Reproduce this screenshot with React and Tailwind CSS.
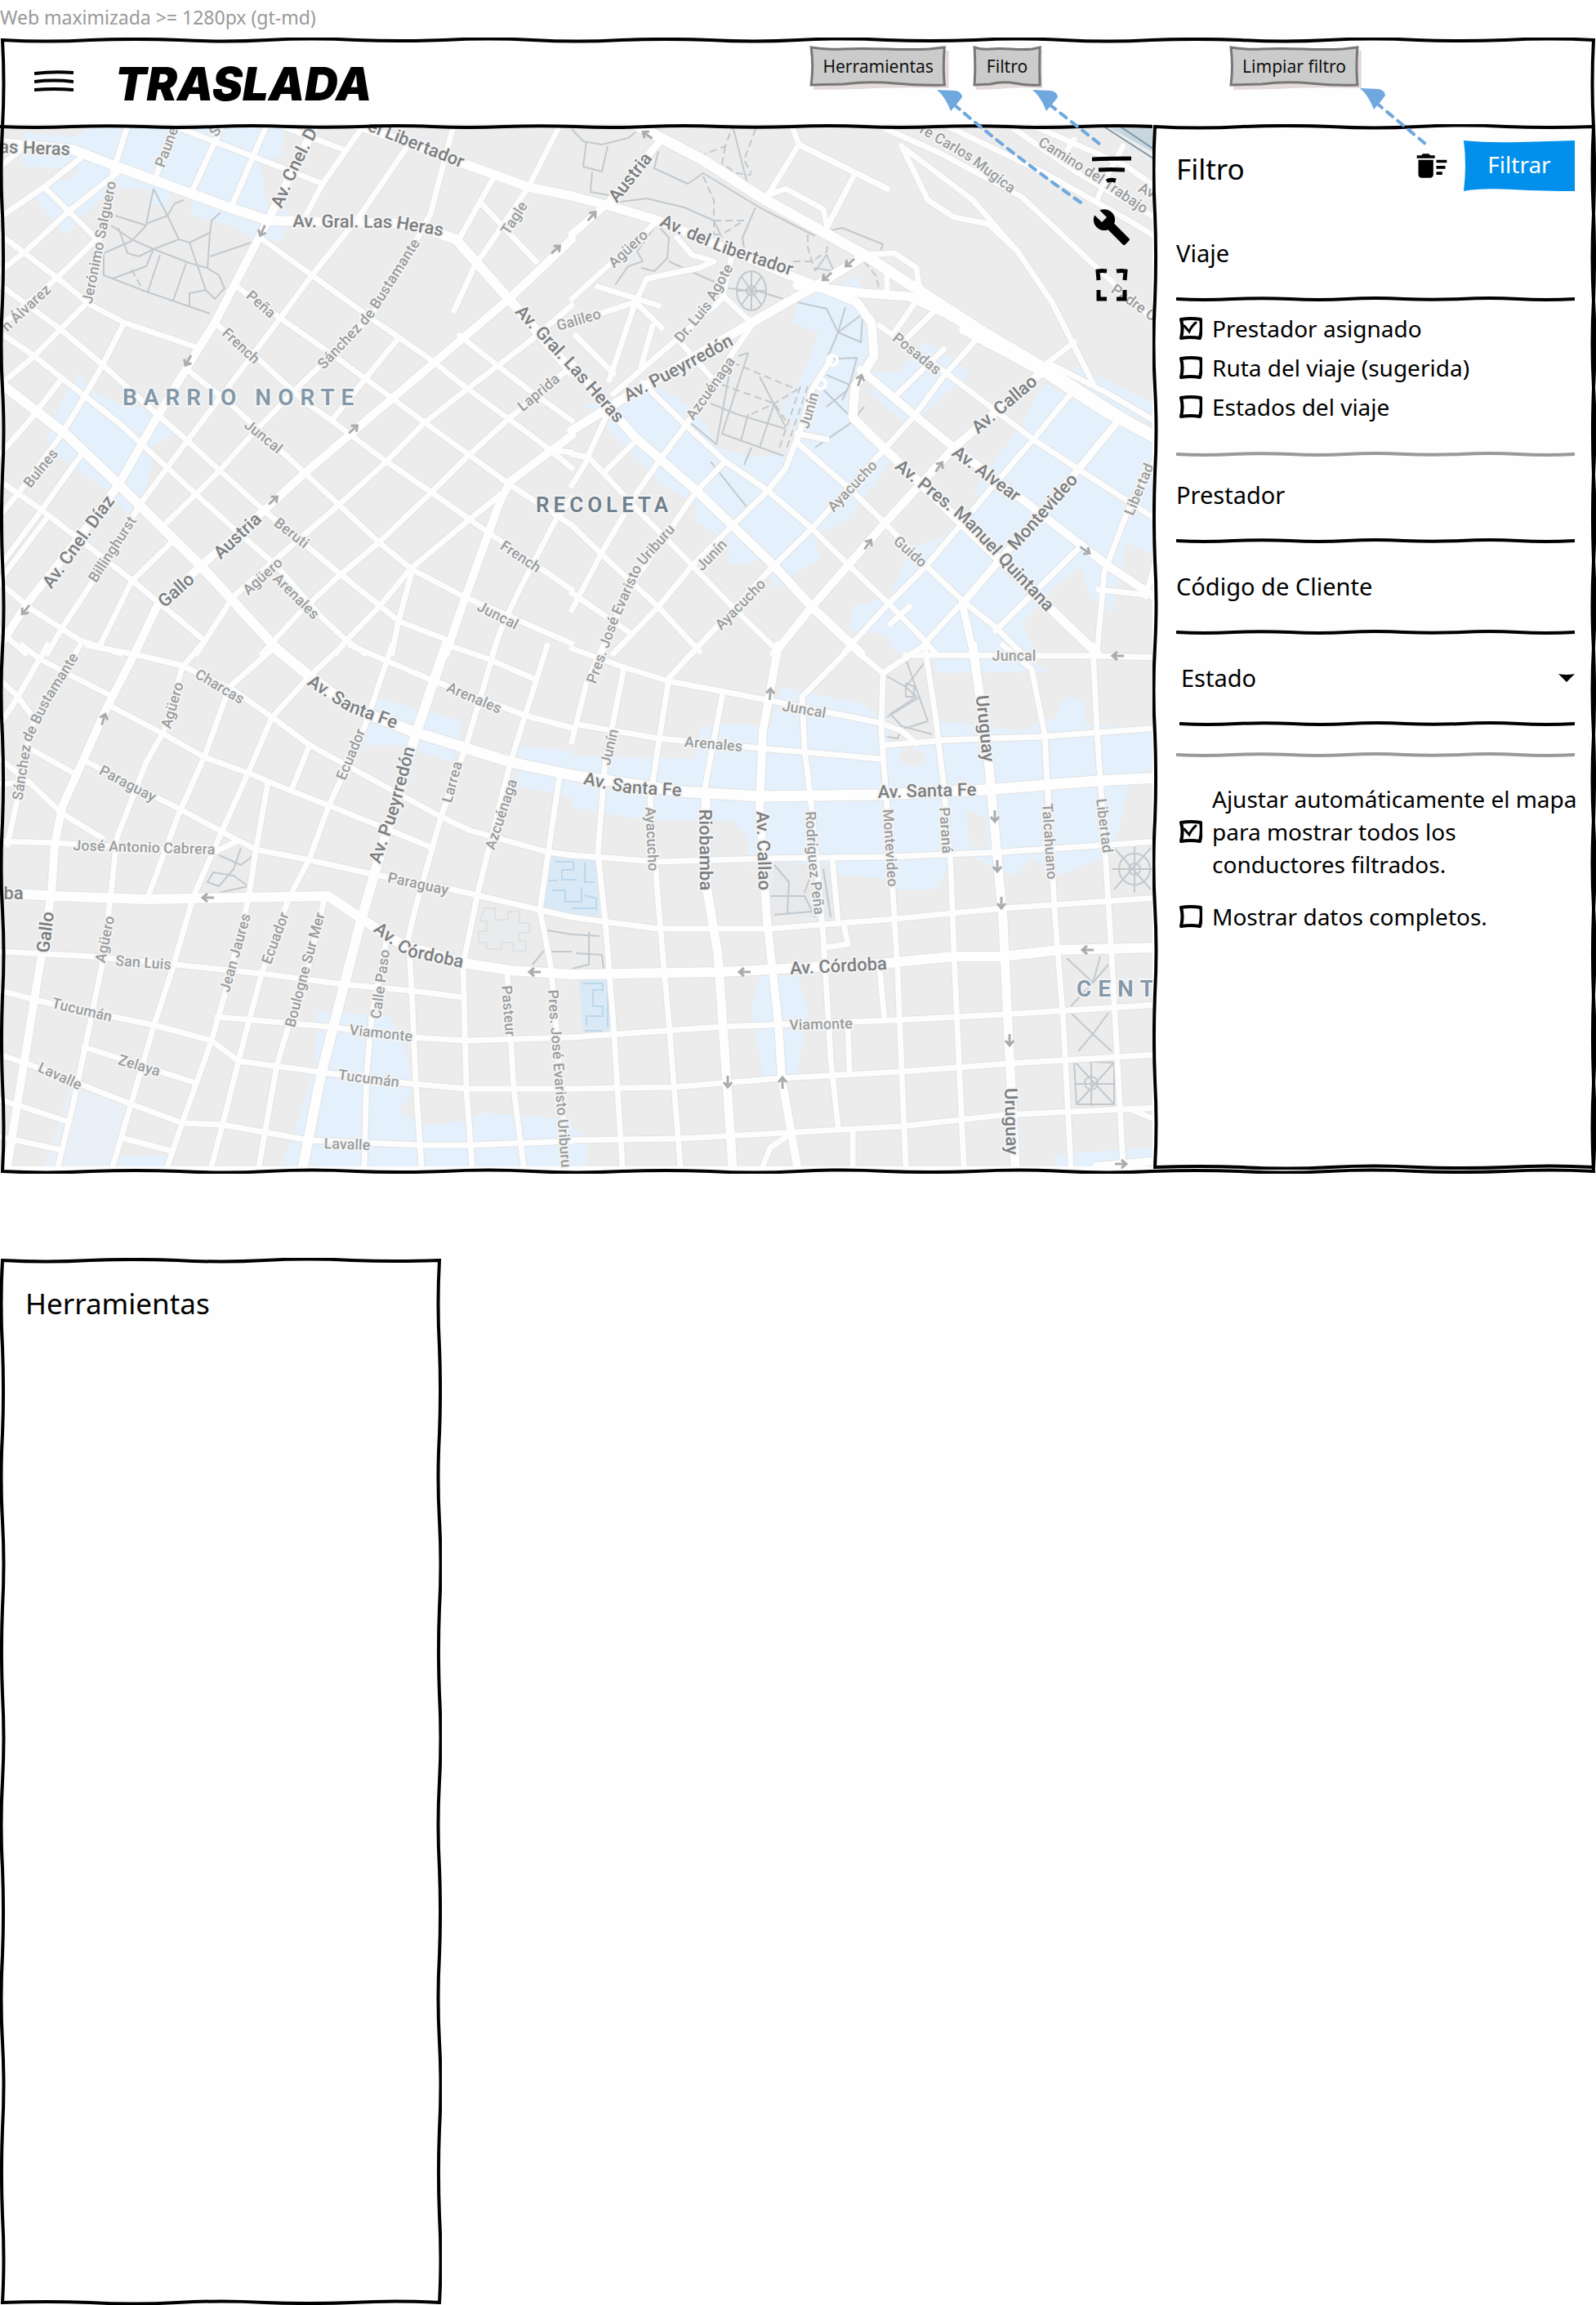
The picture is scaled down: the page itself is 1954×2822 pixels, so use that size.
import React from "react";
import { MdBuild, MdDeleteSweep } from "react-icons/md";

/* ---------- Hand-drawn strokes ---------- */

function wave(x1, y1, x2, y2, step, amp) {
  const len = Math.hypot(x2 - x1, y2 - y1);
  const n = Math.max(2, Math.round(len / step));
  const nx = -(y2 - y1) / len;
  const ny = (x2 - x1) / len;
  let d = "";
  for (let i = 0; i < n; i++) {
    const side = (i % 2 ? -amp : amp) * (i % 3 === 1 ? 0.7 : 1);
    const m = (i + 0.5) / n;
    const e = (i + 1) / n;
    d += ` Q${x1 + (x2 - x1) * m + nx * side},${y1 + (y2 - y1) * m + ny * side} ${x1 + (x2 - x1) * e},${y1 + (y2 - y1) * e}`;
  }
  return d;
}

function boxPath(x1, y1, x2, y2, step, amp) {
  return `M${x1},${y1}${wave(x1, y1, x2, y1, step, amp)}${wave(x2, y1, x2, y2, step, amp)}${wave(x2, y2, x1, y2, step, amp)}${wave(x1, y2, x1, y1, step, amp)}Z`;
}

function SketchFrame({ w, h }) {
  return (
    <svg
      className="pointer-events-none absolute inset-0 h-full w-full"
      viewBox={`0 0 ${w} ${h}`}
      preserveAspectRatio="none"
      aria-hidden="true"
    >
      <path d={boxPath(3, 3, w - 3, h - 3, 110, 3)} fill="none" stroke="#000" strokeWidth="4" vectorEffect="non-scaling-stroke" />
    </svg>
  );
}

function SketchLine({ color = "#000", className = "" }) {
  return (
    <svg className={`block h-2 w-full ${className}`} viewBox="0 0 486 8" preserveAspectRatio="none" aria-hidden="true">
      <path d={`M0,4${wave(0, 4, 486, 4, 70, 2)}`} fill="none" stroke={color} strokeWidth="4" vectorEffect="non-scaling-stroke" />
    </svg>
  );
}

/* ---------- Map data: four sheets, each on its own 1568-unit grid ---------- */

const SHEETS = {
  nw: { x: 0, y: 150, sx: 700 / 1568, sy: 650 / 1568 },
  ne: { x: 700, y: 150, sx: 720 / 1568, sy: 650 / 1568 },
  sw: { x: 0, y: 790, sx: 700 / 1568, sy: 660 / 1568 },
  se: { x: 700, y: 790, sx: 720 / 1568, sy: 660 / 1568 },
};

function project(sheet, text) {
  const s = SHEETS[sheet];
  return text
    .trim()
    .split(/\s+/)
    .map((p) => p.split(",").map(Number))
    .map(([x, y]) => [Math.round(s.x + x * s.sx), Math.round(s.y + y * s.sy)]);
}
const pts = (sheet, text) => project(sheet, text).map((p) => p.join(",")).join(" ");

const AVENUES = [
  ["nw", 12, "0,60 200,80 320,130 640,255 740,290 1130,300 1250,345 1395,520 1568,735"],
  ["nw", 10, "870,0 735,290 590,590 515,720 430,870 325,1070 170,1290 75,1420 10,1530"],
  ["nw", 10, "1568,345 1395,520 830,1040 720,1150 550,1310 430,1430 370,1568"],
  ["nw", 12, "0,770 180,920 320,1065 550,1310 770,1568"],
  ["nw", 11, "960,0 1270,120 1450,190 1568,218"],
  ["nw", 10, "1568,925 1400,1060 1370,1120 1270,1420 1222,1568"],
  ["ne", 11, "0,218 100,245 230,290 600,460 680,495 760,530 800,590 805,690 755,780 750,870 870,1000 1280,1440 1400,1568"],
  ["ne", 13, "160,0 350,110 510,225 780,390 1100,620 1270,730 1420,840 1568,940"],
  ["ne", 11, "600,480 780,505 900,515 1000,565 1110,640"],
  ["ne", 15, "1050,610 1270,740 1420,850 1568,935"],
  ["ne", 9, "0,330 95,240 230,60"],
  ["ne", 11, "0,910 130,820 480,590 640,490 770,400"],
  ["ne", 11, "0,715 170,930 330,1085 540,1310 640,1430 770,1568"],
  ["ne", 10, "1250,740 1020,960 830,1190 640,1430 540,1568"],
  ["ne", 10, "770,730 910,860 1020,960 1220,1130 1430,1310 1568,1410"],
  ["ne", 9, "1450,890 1340,1040 1150,1280 1040,1420 1072,1568"],
  ["sw", 10, "380,0 290,190 170,470 150,580 140,720 110,930 60,1250 20,1516"],
  ["sw", 12, "0,720 150,730 400,740 900,730 1000,800 1100,870 1270,925 1400,945 1568,957"],
  ["sw", 13, "745,0 850,90 960,180 1130,250 1250,290 1400,340 1568,378"],
  ["sw", 12, "1222,0 1140,260 1040,620 990,800 940,1000 880,1250 830,1516"],
  ["se", 13, "0,378 290,425 500,440 820,435 1100,420 1400,395 1568,385"],
  ["se", 12, "0,957 400,950 840,925 1020,905 1150,905 1300,885 1568,878"],
  ["se", 11, "358,440 360,700 390,900 430,1516"],
  ["se", 10, "550,0 510,250 500,470 520,800 550,1100 560,1260 600,1516"],
  ["se", 11, "1070,0 1110,330 1150,800 1165,1150 1182,1516"],
  ["se", 10, "1400,1516 1568,1498"],
];

const STREETS = {
  nw: [
    "500,20 690,100 885,180", "770,10 940,80", "0,330 160,460 250,540 340,590 530,660", "120,190 270,350",
    "0,480 165,610 280,715 430,860 515,940 605,1030 720,1140 935,1335 1095,1475 1230,1530",
    "0,620 95,690 170,755 330,890 460,1020 540,1100 640,1200 760,1310 880,1460 950,1530 1000,1568",
    "590,590 710,700 830,820 910,880 1060,1000 1180,1090 1340,1210 1568,1380",
    "515,730 640,840 830,1030 1040,1240 1130,1320 1270,1400 1568,1540",
    "650,485 770,580 930,700 1070,810 1175,895 1290,985 1400,1070 1568,1190",
    "720,345 855,450 1020,580 1180,700 1280,785 1395,875 1500,960 1568,1020",
    "1260,630 1360,715 1450,790 1568,880", "1320,240 1470,410", "1500,965 1568,975",
    "0,1060 110,1140 240,1250 360,1350 560,1530", "0,1360 90,1440 220,1530 330,1568", "0,1500 70,1568",
    "0,130 80,60", "320,150 190,260 70,380 0,440", "240,90 120,190 0,280",
    "350,10 310,150 260,400 240,530 165,610 95,690 0,775", "480,10 425,165", "610,10 525,210", "730,10 635,250",
    "260,350 155,460 0,600", "340,590 280,720 230,810 170,920 60,1080 0,1160", "170,755 80,880 0,980",
    "990,20 885,180 830,290", "1110,80 990,270 855,450 740,620 620,790 500,960 390,1120 250,1360 165,1500 130,1568",
    "1240,20 1180,270 1140,350 1020,570 820,780 700,910 600,1030 460,1180", "1350,170 1260,340",
    "1530,20 1450,190 1300,430 1245,555", "1090,640 1000,760 910,880",
    "1568,540 1450,650 1280,790 1160,890 1060,1000 930,1130 800,1250 640,1400 540,1568",
    "1568,720 1400,870 1280,990 1180,1095 1040,1240 930,1340 820,1450 720,1568",
    "1370,1100 1290,1170 1125,1320 1040,1430 950,1530 920,1568", "1130,1330 1090,1480 1075,1568",
    "1568,1110 1520,1180 1430,1370 1380,1480 1350,1568", "480,1230 360,1355 270,1550", "225,980 110,1150 0,1310",
    "130,1165 0,1350",
  ],
  ne: [
    "820,600 1000,740 1230,935 1360,1030 1568,1180", "600,945 740,1080 840,1190 945,1310 1040,1410 1130,1490 1200,1568",
    "190,770 300,890 410,1000 520,1085 640,1200 740,1310 845,1420 940,1530 970,1568",
    "1080,640 990,750 910,870 830,970 640,1200 530,1320 320,1568", "965,560 890,640", "860,810 990,670",
    "1330,800 1230,935 1110,1090 945,1310 845,1420 730,1560", "1350,1260 1130,1500", "940,1540 1030,1430",
    "1568,970 1480,1150 1420,1330 1400,1568", "600,930 570,1020 520,1090 430,1190 320,1310 230,1430 110,1568",
    "690,700 640,790 600,940", "600,920 680,935", "480,600 430,680 300,900 240,990 170,1100 80,1270 0,1440",
    "410,1000 330,1090 270,1190 150,1380 80,1568", "0,980 45,990 180,1150 270,1250 430,1430 540,1550",
    "45,980 100,850", "45,990 0,1070", "90,1030 170,940", "0,1190 80,1275 230,1430 340,1560", "0,1390 160,1510",
    "800,0 980,90 1200,220 1400,430 1568,600", "880,70 950,230 1020,280 1110,300 1190,380 1280,530 1390,770",
    "890,80 1070,230 1190,380", "1000,10 1260,150 1500,300 1568,345", "1180,20 1350,150 1568,290",
    "1230,10 1480,130 1568,200", "1340,50 1310,100", "1470,70 1430,150 1400,230", "590,20 605,65 520,220",
    "605,65 840,195", "755,150 680,310", "520,215 570,195 670,255 680,300", "840,440 840,510", "910,540 860,620",
    "1340,650 1270,710", "780,390 860,385 920,430 925,480", "280,340 320,390 380,410 340,430 200,460 170,530 100,760",
    "70,485 230,540", "0,590 170,530 240,605", "215,600 185,720", "430,380 400,520 280,640 110,800",
    "0,520 100,420 220,300", "400,510 480,590", "290,650 370,750", "10,630 110,740", "1405,1380 1568,1400",
    "1270,710 1430,800 1568,890", "900,1430 850,1480", "1568,1250 1530,1400",
  ],
  sw: [
    "60,0 110,40 200,90 310,150",
    "240,0 390,30 500,60 640,130 745,210 850,290 950,350 1210,500 1290,540 1500,600 1568,610",
    "310,180 450,260 560,325 690,375 790,420 900,465 1040,525 1185,590", "80,300 200,370",
    "240,340 500,480 640,560 700,595 850,625 1020,665 1240,710 1480,770 1568,790", "0,330 80,400 170,490 280,560",
    "0,405 80,400", "0,570 150,575 590,600 650,570", "0,890 250,905 480,930 720,955 940,985 1130,1005 1270,1025",
    "0,1005 150,1045 420,1105 580,1150 655,1210 900,1245 1130,1275 1280,1290 1568,1290",
    "595,1080 900,1110 1130,1140 1280,1150 1568,1140", "230,1170 530,1270",
    "0,1190 110,1230 350,1330 500,1390 610,1395 850,1440 1150,1455 1290,1455 1568,1442", "0,1320 185,1385",
    "0,1430 160,1465", "340,1435 470,1470", "220,0 80,250 50,440 20,580", "130,0 50,150 0,230", "0,100 50,150 90,210",
    "550,0 500,65 450,250 400,340 320,560 305,720 280,930 235,1160 200,1340 160,1516",
    "940,0 850,90 745,210 680,370 600,560 530,730 470,950 420,1110 360,1330 310,1516",
    "740,20 630,120 560,325 490,490 410,720",
    "1075,0 1000,240 900,470 850,620 790,740 720,950 680,1100 655,1210 610,1400 580,1516", "850,290 800,420",
    "735,400 700,600 680,740 620,1000 580,1150 500,1390 460,1516", "890,740 840,960 790,1110 760,1220 710,1516",
    "1360,0 1280,290 1210,500 1140,760 1120,850 1130,1000 1140,1270 1155,1516",
    "1500,0 1400,340 1310,720 1270,930 1280,1290 1295,1516", "1535,380 1480,770 1510,930 1520,1050 1555,1516",
    "1060,860 1020,1080 1005,1240 1000,1516", "1390,950 1400,1130 1410,1290 1435,1516",
    "960,0 1180,100 1440,205 1568,240", "1230,0 1340,40 1470,100",
  ],
  se: [
    "0,10 140,65 260,105 520,160 820,225 880,250 920,285", "890,28 1390,30 1568,35", "15,230 230,270 500,300 820,330",
    "840,290 1000,275 1250,265 1568,240", "0,610 230,630 520,620 850,615 1150,600 1568,570",
    "0,790 230,825 530,825 860,795 1150,765 1568,735", "0,1140 400,1110 860,1090 1150,1075 1568,1045",
    "0,1290 270,1285 560,1260 880,1240 1200,1215 1568,1190", "0,1440 290,1435 600,1415 880,1400 1150,1365 1568,1345",
    "85,0 40,110 0,280", "140,65 90,340 70,600 90,800 110,1100 135,1516", "340,0 260,95 230,290 210,450 230,750 260,1100 290,1516",
    "400,150 350,440", "740,10 615,150 620,300 640,480 670,850 690,1200 710,1400",
    "740,0 830,80 825,250 850,600 870,950 880,1240 890,1516", "830,80 940,0",
    "940,0 970,200 990,400 1010,640 1020,900 1045,1516", "1150,0 1225,70 1260,260 1270,440 1290,800 1310,1100 1330,1516",
    "1390,0 1400,250 1420,560 1440,900 1470,1516", "695,620 710,800", "670,880 735,870 725,810", "820,940 835,1090",
    "735,1110 740,1240", "750,1415 750,1516", "510,1516 530,1460 570,1430", "1490,1350 1568,1385",
  ],
};

const ZONES = [
  ["nw", "#e4f0fb", "60,30 200,40 240,20 350,10 780,10 770,100 715,120 735,262 800,260 770,350 700,350 650,310 525,270 525,200 470,195 460,250 410,240 410,200 320,190 240,260 180,335 95,220 140,180 200,160 220,135 60,130"],
  ["nw", "#e4f0fb", "220,740 240,790 330,830 420,850 480,920 410,960 415,1010 400,1090 350,1160 310,1100 220,1030 160,990 125,940 180,800"],
  ["ne", "#e4f0fb", "600,520 690,490 780,560 790,680 740,780 750,880 860,980 800,1080 730,1180 650,1220 660,1290 600,1330 540,1375 510,1290 420,1310 420,1240 330,1180 330,1130 240,1070 180,1000 30,830 150,830 220,770 300,830 350,880 390,960 480,990 570,980 600,900 560,850 600,780 640,680 660,620 590,590"],
  ["ne", "#e4f0fb", "800,730 870,740 940,645 1060,740 980,820 900,900 800,800"],
  ["ne", "#e4f0fb", "1260,770 1400,850 1568,950 1568,1290 1480,1240 1440,1450 1380,1400 1360,1310 1290,1370 1200,1480 1240,1568 730,1568 750,1430 850,1400 900,1260 1000,1220 1080,1070 1200,890"],
  ["ne", "#e4f0fb", "1350,720 1568,840 1568,900 1290,770"],
  ["ne", "#ececec", "740,1500 830,1510 870,1568 740,1568"],
  ["ne", "#ececec", "930,1060 1010,1030 1100,1120 1030,1190"],
  ["ne", "#e4f0fb", "720,480 755,450 775,490"],
  ["ne", "#c8d6df", "1410,0 1568,100 1568,0"],
  ["sw", "#e4f0fb", "1030,150 1130,180 1270,220 1240,340 1100,290 1000,290"],
  ["sw", "#e4f0fb", "1420,290 1568,310 1568,440 1420,410"],
  ["sw", "#e4f0fb", "870,1065 1070,1080 1120,1200 1130,1300 1095,1355 1160,1400 1290,1380 1320,1360 1568,1380 1568,1516 770,1516 800,1440 860,1240"],
  ["sw", "#d9e9f5", "1505,610 1568,610 1568,785 1490,765"],
  ["sw", "#eaf0f8", "190,1290 350,1330 300,1516 120,1516"],
  ["sw", "#e4f0fb", "320,1490 480,1480 460,1516 310,1516"],
  ["se", "#e4f0fb", "0,320 330,330 340,240 430,225 530,240 560,120 780,170 840,230 850,290 960,290 970,220 1070,230 1200,250 1290,210 1315,150 1370,160 1370,230 1568,240 1568,340 1485,400 1460,540 1420,620 1290,670 1230,620 1180,670 1030,600 970,710 870,710 860,680 600,660 470,640 470,560 430,510 200,510 0,470"],
  ["se", "#e4f0fb", "960,0 1150,0 1270,75 970,80"],
  ["se", "#ececec", "875,310 905,295 945,320 940,350 880,350"],
  ["se", "#ececec", "1050,480 1100,500 1110,590 1060,585"],
  ["se", "#e4f0fb", "500,960 600,960 630,1060 600,1250 510,1250 480,1050"],
  ["se", "#d9e9f5", "0,610 65,620 75,790 0,780"],
  ["se", "#d9e9f5", "20,975 100,975 100,1130 30,1130"],
  ["se", "#e4f0fb", "0,1400 40,1440 40,1516 0,1516"],
  ["se", "#e4f0fb", "1290,1480 1568,1460 1568,1516 1290,1516"],
  ["se", "#e7e9eb", "540,630 630,640 690,640 700,795 530,785"],
];

const PATHS = [
  ["nw", "420,195 460,275 490,345 520,355 575,325 580,290 605,265"],
  ["nw", "420,195 400,300 460,275 480,240 505,230"],
  ["nw", "315,275 400,305 360,350 285,385 285,450 400,500 575,565"],
  ["nw", "325,310 350,385 380,395 420,375 360,345 305,305"],
  ["nw", "420,375 520,415 570,430 600,450 615,490 590,520 565,495 520,355"],
  ["nw", "440,390 405,500"], ["nw", "510,415 475,525"], ["nw", "575,325 570,430"], ["nw", "575,395 700,350"],
  ["nw", "420,375 400,425 310,460"], ["nw", "490,345 420,375"], ["nw", "565,495 520,505 520,545"],
  ["ne", "0,20 30,55 80,65 150,45 170,30"], ["ne", "40,55 30,130 80,145 95,70"], ["ne", "55,145 50,205 100,215"],
  ["ne", "230,85 220,135 310,180 350,150 500,250 650,335"],
  ["ne", "95,240 200,225 300,250 380,290 400,340"], ["ne", "490,250 455,340 460,370"], ["ne", "430,10 470,190"],
  ["ne", "220,310 200,340 175,380 190,410 150,425 115,480"], ["ne", "235,310 260,340 255,400 220,440 185,430"],
  ["ne", "260,410 340,450 420,490 500,500 565,520"], ["ne", "680,320 720,310 830,360 820,385"],
  ["ne", "650,440 680,390 700,440 650,430"], ["ne", "600,530 680,550 710,620 770,570"], ["ne", "730,545 710,620 680,700"],
  ["ne", "710,620 770,650 775,570"], ["ne", "680,700 760,695 740,780"], ["ne", "680,745 740,775 720,820"],
  ["ne", "670,790 735,860"], ["ne", "680,840 735,790"], ["ne", "780,840 740,890 650,960"],
  ["ne", "470,680 400,920 565,985"], ["ne", "445,690 470,680"], ["ne", "320,890 385,950 430,690"],
  ["ne", "370,830 440,860 570,905"], ["ne", "500,750 570,900"], ["ne", "540,830 500,960"], ["ne", "470,860 450,940"],
  ["ne", "460,1010 480,960"], ["ne", "370,1000 470,1140"],
  ["sw", "600,610 660,640 690,615"], ["sw", "660,590 640,650 600,700 570,690 585,660 640,670 680,700 600,720"],
  ["sw", "1500,830 1568,840"], ["sw", "1460,930 1490,890 1568,890"],
  ["se", "840,90 890,120 940,50"], ["se", "890,40 950,220 880,245"], ["se", "890,120 920,150 850,200 880,235 960,260"],
  ["se", "890,110 915,120 910,150 890,150 890,110"], ["se", "840,210 930,150"], ["se", "840,265 870,270 880,240"],
  ["se", "540,640 580,690 575,780"], ["se", "530,730 620,730 650,790"], ["se", "540,785 640,775"], ["se", "620,720 640,660"],
  ["se", "670,650 690,790"], ["se", "0,840 75,845"], ["se", "45,835 45,930 0,940"], ["se", "10,895 80,900 85,940"],
  ["se", "1320,910 1390,980 1410,905"], ["se", "1430,930 1390,980 1330,1050"], ["se", "1330,1070 1390,1130 1430,1070"],
  ["se", "1440,1180 1390,1130 1350,1180"], ["se", "1340,1210 1445,1215 1445,1335 1345,1335 1340,1210"],
  ["se", "1340,1210 1445,1335"], ["se", "1445,1215 1345,1335"], ["se", "1340,1275 1445,1275"], ["se", "1385,1210 1385,1340"],
  ["se", "1445,590 1545,710"], ["se", "1545,590 1445,710"], ["se", "1440,650 1560,650"], ["se", "1500,580 1500,720"],
];

const DASHES = [
  ["ne", "340,100 410,70 430,10"], ["ne", "410,70 400,120 440,150 480,155"], ["ne", "490,20 460,110 480,150"],
  ["ne", "350,160 380,230 380,330"], ["ne", "380,290 460,290 400,330 350,330"], ["ne", "590,410 640,410 680,380 690,320 810,390"],
  ["ne", "630,330 630,370 650,440"], ["ne", "780,410 810,450 820,495 740,490"], ["ne", "430,710 600,790 540,830 480,860"],
  ["ne", "400,775 540,830 570,880"], ["ne", "610,780 550,970"], ["ne", "630,780 570,970"],
  ["nw", "360,435 395,500"],
];

const ARROWS = [
  ["nw", 720, 320, 115], ["nw", 515, 705, 120], ["nw", 70, 1440, 130], ["nw", 970, 905, -42], ["nw", 750, 1115, -42],
  ["nw", 1525, 375, -42], ["ne", 200, 35, -145], ["ne", 55, 275, -48], ["ne", 740, 415, 140], ["ne", 680, 455, 140],
  ["ne", 768, 760, -72], ["ne", 980, 1015, -55], ["ne", 790, 1245, -55], ["ne", 1370, 1265, 35], ["sw", 285, 215, -72],
  ["sw", 570, 735, 180], ["sw", 1465, 950, 180], ["se", 530, 140, -85], ["se", 1455, 32, 180], ["se", 1128, 500, 90],
  ["se", 1135, 645, 90], ["se", 1145, 750, 90], ["se", 1375, 887, 180], ["se", 460, 950, 180], ["se", 417, 1270, 90],
  ["se", 562, 1270, -90], ["se", 1167, 1150, 90], ["se", 1465, 1508, 0],
];

/* Street names run along the line that joins their points. */
const MAJOR_NAMES = [
  ["nw", "as Heras", "0,75 190,82"], ["nw", "Av. Gral. Las Heras", "805,295 1080,297 1215,320"],
  ["nw", "Av. Cnel. D", "760,250 805,140 860,20"], ["nw", "el Libertador", "1010,10 1130,60 1270,120"],
  ["nw", "Av. Cnel. Díaz", "130,1370 210,1250 305,1110"], ["nw", "Austria", "595,1280 710,1165"],
  ["nw", "Gallo", "445,1420 525,1345"], ["nw", "Av. Gral. Las Heras", "1420,550 1568,720 1700,880"],
  ["ne", "Austria", "110,230 205,100"], ["ne", "Av. del Libertador", "235,290 400,370 590,440"],
  ["ne", "Av. Pueyrredón", "145,810 280,730 425,645"], ["ne", "Av. Callao", "1075,910 1235,760"],
  ["ne", "Av. Alvear", "1020,970 1190,1110"], ["ne", "Av. Pres. Manuel Quintana", "870,1010 1050,1170 1275,1435"],
  ["ne", "Montevideo", "1175,1255 1340,1050"], ["sw", "Av. Santa Fe", "845,100 960,180 1090,230"],
  ["sw", "Av. Pueyrredón", "1030,630 1080,480 1125,300"], ["sw", "ba", "10,725 65,725"], ["sw", "Gallo", "120,890 135,780"],
  ["sw", "Av. Córdoba", "1030,820 1120,890 1270,925"], ["se", "Av. Santa Fe", "30,390 150,415 295,425"],
  ["se", "Av. Santa Fe", "815,430 1080,422"], ["se", "Riobamba", "352,480 356,710"], ["se", "Av. Callao", "505,480 512,715"],
  ["se", "Av. Córdoba", "582,942 840,928"], ["se", "Uruguay", "1090,150 1108,335"], ["se", "Uruguay", "1168,1290 1172,1480"],
];

const MINOR_NAMES = [
  ["nw", "Jerónimo Salguero", "240,530 270,360 305,175"], ["nw", "Paune", "440,125 475,20"], ["nw", "S", "580,40 600,10"],
  ["nw", "n Álvarez", "10,610 135,485"], ["nw", "Peña", "680,505 750,570"], ["nw", "French", "615,615 705,705"],
  ["nw", "Sánchez de Bustamante", "880,720 1010,570 1140,350"], ["nw", "Tagle", "1385,325 1435,240"],
  ["nw", "Laprida", "1425,845 1530,750"], ["nw", "Juncal", "675,885 770,970"], ["nw", "Bulnes", "75,1070 150,970"],
  ["nw", "Billinghurst", "250,1355 365,1165"], ["nw", "Beruti", "755,1175 845,1250"], ["nw", "Agüero", "675,1385 765,1295"],
  ["nw", "Arenales", "755,1340 870,1460"], ["nw", "French", "1375,1245 1480,1320"], ["nw", "Juncal", "1310,1425 1420,1485"],
  ["nw", "Galileo", "1530,600 1645,565"], ["ne", "Agüero", "105,420 195,325"], ["ne", "Dr. Luis Agote", "280,645 360,540 420,420"],
  ["ne", "Azcuénaga", "315,870 425,700"], ["ne", "Junín", "620,895 645,805"], ["ne", "Posadas", "860,630 980,735"],
  ["ne", "re Carlos Mugica", "930,15 1060,100 1180,200"], ["ne", "Camino del Trabajo", "1265,65 1400,160 1515,245"],
  ["ne", "Av.", "1515,190 1560,215"], ["ne", "Padre C", "1440,485 1560,580"], ["ne", "Ayacucho", "690,1140 805,1005"],
  ["ne", "Guido", "865,1230 940,1305"], ["ne", "Libertad", "1485,1155 1540,1010"], ["ne", "Junín", "340,1315 405,1240"],
  ["ne", "Ayacucho", "390,1490 510,1355"], ["ne", "Pres. José Evaristo Uriburu", "50,1660 110,1470 175,1310 270,1190"],
  ["sw", "Sánchez de Bustamante", "50,440 75,270 125,160 200,35"], ["sw", "Agüero", "455,240 490,110"],
  ["sw", "Charcas", "540,80 665,160"], ["sw", "Paraguay", "275,360 425,445"], ["sw", "José Antonio Cabrera", "200,582 592,594"],
  ["sw", "Ecuador", "935,390 990,245"], ["sw", "Larrea", "1225,455 1255,340"], ["sw", "Azcuénaga", "1345,590 1405,395"],
  ["sw", "Arenales", "1230,120 1370,185"], ["sw", "Paraguay", "1065,675 1230,712"], ["sw", "Agüero", "275,920 300,790"],
  ["sw", "San Luis", "318,918 468,928"], ["sw", "Jean Jaures", "615,1005 675,785"], ["sw", "Ecuador", "730,925 780,780"],
  ["sw", "Boulogne Sur Mer", "795,1110 830,960 878,780"], ["sw", "Calle Paso", "1030,1085 1055,885"],
  ["sw", "Tucumán", "145,1040 305,1080"], ["sw", "Zelaya", "325,1205 438,1240"], ["sw", "Lavalle", "108,1225 222,1280"],
  ["sw", "Viamonte", "960,1120 1130,1137"], ["sw", "Tucumán", "930,1250 1092,1270"], ["sw", "Lavalle", "890,1450 1015,1453"],
  ["sw", "Pasteur", "1388,990 1400,1135"], ["sw", "Pres. José Evaristo Uriburu", "1516,1010 1530,1200 1552,1510"],
  ["se", "Juncal", "562,175 678,198"], ["se", "Arenales", "302,280 453,295"], ["se", "Junín", "90,345 110,248"],
  ["se", "Ayacucho", "210,470 218,655"], ["se", "Rodríguez Peña", "636,487 645,640 660,780"],
  ["se", "Montevideo", "842,478 855,700"], ["se", "Paraná", "993,470 1002,605"], ["se", "Talcahuano", "1268,460 1280,680"],
  ["se", "Libertad", "1412,450 1428,600"], ["se", "Juncal", "1122,30 1237,30"], ["se", "Viamonte", "582,1104 748,1100"],
];

function labelPath(sheet, text) {
  const p = project(sheet, text);
  const stretch = ([ax, ay], [bx, by]) => {
    const l = Math.hypot(ax - bx, ay - by);
    return [ax + ((ax - bx) / l) * 24, ay + ((ay - by) / l) * 24];
  };
  const first = stretch(p[0], p[1]);
  const last = stretch(p[p.length - 1], p[p.length - 2]);
  return "M" + [first, ...p.slice(1, -1), last].map((q) => q.join(",")).join(" L");
}

function StreetNames({ names, prefix, size, color }) {
  return (
    <g fontSize={size} fontWeight="500" fill={color} stroke="#f4f4f4" strokeWidth="4" strokeLinejoin="round" paintOrder="stroke" textAnchor="middle">
      {names.map(([sheet, name, line], i) => (
        <g key={i}>
          <path id={`${prefix}-${i}`} d={labelPath(sheet, line)} fill="none" stroke="none" />
          <text dy="6">
            <textPath href={`#${prefix}-${i}`} startOffset="50%">{name}</textPath>
          </text>
        </g>
      ))}
    </g>
  );
}

function CityMap() {
  const streets = Object.entries(STREETS).flatMap(([sheet, list]) => list.map((l) => pts(sheet, l)));
  return (
    <svg
      className="absolute inset-0 h-full w-full"
      viewBox="0 152 1411 1280"
      preserveAspectRatio="xMinYMin slice"
      role="img"
      aria-label="Mapa"
      fontFamily="Roboto, sans-serif"
    >
      <rect x="0" y="150" width="1412" height="1278" fill="#ececec" />
      {ZONES.map(([s, fill, z], i) => <polygon key={i} points={pts(s, z)} fill={fill} />)}
      <g fill="none" stroke="#c2c9ce" strokeWidth="2" strokeLinejoin="round">
        {PATHS.map(([s, l], i) => <polyline key={i} points={pts(s, l)} />)}
        <circle cx="1389" cy="1064" r="19" />
        <circle cx="1389" cy="1064" r="7" />
        <circle cx="1336" cy="1326" r="8" />
        <ellipse cx="920" cy="356" rx="18" ry="24" />
        <circle cx="920" cy="356" r="6" />
        <path d="M920,332 V380 M902,356 H938 M908,339 L932,373 M932,339 L908,373" />
        <g strokeDasharray="9 5">
          {DASHES.map(([s, l], i) => <polyline key={i} points={pts(s, l)} />)}
        </g>
      </g>
      <path d="M592,1112 h14 v14 h16 v-10 h14 v14 h12 v12 h-12 v10 h8 v12 h-16 v-10 h-14 v8 h-18 v-8 h-10 v-14 h10 v-12 h-8 Z" fill="#e9ebec" stroke="#dfe2e3" strokeWidth="2" />
      <g fill="none" stroke="#bcd8ec" strokeWidth="2">
        <path d="M680,1055 h22 v10 h-14 v12 h18 M676,1090 h16 v14 h20 v-18 M716,1056 v24 h12 M700,1112 h30 M672,1078 h10 M716,1096 l14,4 v14" />
        <path d="M712,1204 h26 v8 h-12 v20 h12 v12 h-20 v12 M744,1206 v52 M716,1262 h22" />
      </g>
      <path d="M1350,154 l62,40 M1370,154 l42,28" stroke="#7f96a6" strokeWidth="2" />
      <g fill="none" strokeLinejoin="round">
        <g stroke="#e2e3e4" strokeWidth="9">{streets.map((p, i) => <polyline key={i} points={p} />)}</g>
        <g stroke="#e2e3e4">{AVENUES.map(([s, w, l], i) => <polyline key={i} points={pts(s, l)} strokeWidth={w + 2} />)}</g>
        <g stroke="#fdfdfd" strokeWidth="7" strokeLinecap="round">{streets.map((p, i) => <polyline key={i} points={p} />)}</g>
        <g stroke="#fefefe" strokeLinecap="round">{AVENUES.map(([s, w, l], i) => <polyline key={i} points={pts(s, l)} strokeWidth={w} />)}</g>
        <circle cx="1019" cy="441" r="6" stroke="#fefefe" strokeWidth="4" />
        <circle cx="1005" cy="470" r="6" stroke="#fefefe" strokeWidth="4" />
      </g>
      <rect x="0" y="1428" width="1412" height="10" fill="#fefefe" />
      {ARROWS.map(([s, x, y, a], i) => {
        const [[px, py]] = project(s, `${x},${y}`);
        return <path key={i} d="M-8,0 H6 M0,-5 L6,0 L0,5" transform={`translate(${px} ${py}) rotate(${a})`} fill="none" stroke="#a9acae" strokeWidth="3" />;
      })}
      <StreetNames names={MINOR_NAMES} prefix="minor" size="18" color="#999c9e" />
      <StreetNames names={MAJOR_NAMES} prefix="major" size="22" color="#7b7e81" />
      <g fontSize="28" fontWeight="600" fill="#8298a9" stroke="#f4f4f4" strokeWidth="4" paintOrder="stroke">
        <text x="150" y="496" letterSpacing="8">BARRIO NORTE</text>
        <text x="656" y="627" fontSize="26" letterSpacing="5" fill="#6f808d">RECOLETA</text>
        <text x="1318" y="1220" letterSpacing="8">CENT</text>
      </g>
    </svg>
  );
}

/* ---------- Controls ---------- */

function Tag({ children, className = "" }) {
  return (
    <span className={`relative block h-[50px] px-4 text-[21px] leading-[50px] whitespace-nowrap text-[#111] ${className}`}>
      <svg className="absolute inset-0 h-full w-full overflow-visible" viewBox="0 0 160 50" preserveAspectRatio="none" aria-hidden="true">
        <path d="M5,7 L163,6 V52 Q100,50 60,53 L5,54 Z" fill="#e4dada" />
        <path d="M2,2 Q20,5 40,4 T90,4 T140,4 L158,2 Q156,25 158,48 Q130,49 100,46 T40,47 L2,48 Q5,25 2,2 Z" fill="#cbcbcb" stroke="#777" strokeWidth="3" vectorEffect="non-scaling-stroke" />
      </svg>
      <span className="relative">{children}</span>
    </span>
  );
}

function Check({ id, label, checked = false, className = "" }) {
  return (
    <div className={`flex items-center gap-3 pl-1 ${className}`}>
      <span className="relative h-7 w-7 shrink-0">
        <input id={id} type="checkbox" defaultChecked={checked} className="peer absolute inset-0 h-7 w-7 appearance-none" />
        <svg className="pointer-events-none absolute inset-0 h-7 w-7" viewBox="0 0 28 28" fill="none" stroke="#000" strokeWidth="4" strokeLinejoin="round" aria-hidden="true">
          <path d="M2,3 Q14,1 26,3 Q28,14 25,26 Q14,24 2,26 Q5,14 2,3 Z" />
        </svg>
        <svg className="pointer-events-none absolute inset-0 hidden h-7 w-7 peer-checked:block" viewBox="0 0 28 28" fill="none" stroke="#000" strokeWidth="3" strokeLinecap="round" aria-hidden="true">
          <path d="M6,11 L12,18 Q15,11 20,7" />
        </svg>
      </span>
      <label htmlFor={id} className="text-[28px] leading-10">{label}</label>
    </div>
  );
}

function TextField({ label, className = "" }) {
  return (
    <div className={className}>
      <input
        type="text"
        aria-label={label}
        placeholder={label}
        className="block h-10 w-full bg-transparent text-[29px] leading-10 outline-none placeholder:text-black placeholder:opacity-100"
      />
      <SketchLine className="mt-8" />
    </div>
  );
}

function FilterPanel() {
  return (
    <aside className="relative w-[543px] shrink-0 bg-[#fefefe] pt-5 pr-[26px] pl-[29px]">
      <SketchFrame w={543} h={1280} />
      <div className="relative flex h-[62px] items-center">
        <h2 className="flex-1 pt-2 text-[35px] leading-[48px]">Filtro</h2>
        <button type="button" aria-label="Limpiar filtro" className="mr-[17px]">
          <MdDeleteSweep className="block h-12 w-11" />
        </button>
        <button type="button" className="relative h-[62px] w-[136px] pb-1 text-[28px] leading-10 text-white">
          <svg className="absolute inset-0 h-full w-full" viewBox="0 0 136 62" preserveAspectRatio="none" aria-hidden="true">
            <path d="M0,0 Q30,3 68,2 T136,0 V62 Q100,62 60,60 T0,62 Q4,30 0,0 Z" fill="#0090ec" />
          </svg>
          <span className="relative">Filtrar</span>
        </button>
      </div>
      <form className="relative" onSubmit={(e) => e.preventDefault()}>
        <TextField label="Viaje" className="mt-14" />
        <div className="mt-3 flex flex-col gap-2">
          <Check id="prestador-asignado" label="Prestador asignado" checked />
          <Check id="ruta" label="Ruta del viaje (sugerida)" />
          <Check id="estados" label="Estados del viaje" />
        </div>
        <SketchLine color="#999" className="mt-[34px]" />
        <TextField label="Prestador" className="mt-[26px]" />
        <TextField label="Código de Cliente" className="mt-8" />
        <div className="mt-8 pl-1">
          <div className="relative">
            <select aria-label="Estado" defaultValue="" className="block h-10 w-full appearance-none bg-transparent pl-[2px] text-[29px] leading-10 outline-none">
              <option value="">Estado</option>
            </select>
            <svg className="pointer-events-none absolute top-[15px] right-0 h-[10px] w-[20px]" viewBox="0 0 20 10" aria-hidden="true">
              <path d="M0,0 Q10,2 20,0 L10,10 Z" />
            </svg>
          </div>
          <SketchLine className="mt-8" />
        </div>
        <SketchLine color="#999" className="mt-[30px]" />
        <Check id="ajustar" checked label="Ajustar automáticamente el mapa para mostrar todos los conductores filtrados." className="mt-[30px] -mr-4" />
        <Check id="completos" label="Mostrar datos completos." className="mt-6" />
      </form>
    </aside>
  );
}

function Callouts() {
  const head = "M0,0 L23,1 Q31,3 31,9 Q25,17 17,26 Q10,8 0,0 Z";
  return (
    <svg className="pointer-events-none absolute top-0 right-0 h-[220px] w-[994px]" viewBox="960 46 994 220" aria-hidden="true">
      <g fill="none" stroke="#6ea8de" strokeWidth="4" strokeLinecap="round" strokeDasharray="9 8">
        <path d="M1168,128 Q1240,190 1329,252" />
        <path d="M1285,128 L1346,176" />
        <path d="M1685,126 L1745,176" />
      </g>
      <g fill="#6ea8de">
        <path d={head} transform="translate(1147 110)" />
        <path d={head} transform="translate(1264 110)" />
        <path d={head} transform="translate(1665 108)" />
      </g>
    </svg>
  );
}

export default function App() {
  return (
    <div className="min-h-screen bg-[#fefefe] font-['Noto_Sans',sans-serif] text-black">
      <p className="h-[46px] pt-[5px] text-[23px] leading-8 text-[#999]">Web maximizada &gt;= 1280px (gt-md)</p>

      <section className="relative">
        <header className="relative flex h-[106px] items-center pl-[42px]">
          <button type="button" aria-label="Menú">
            <svg className="block h-[32px] w-[48px]" viewBox="0 0 48 32" fill="none" stroke="#000" strokeWidth="4" aria-hidden="true">
              <path d="M0,7 Q24,4 48,6 M0,17 Q24,14 48,17 M0,27 Q24,25 48,27" />
            </svg>
          </button>
          <h1 className="ml-[51px] flex-1 pt-2 font-['Inter',sans-serif] text-[56px] leading-[60px] font-black italic">TRASLADA</h1>
          <div className="mr-[290px] flex self-start pt-[10px]">
            <Tag>Herramientas</Tag>
            <Tag className="ml-[33px]">Filtro</Tag>
            <Tag className="ml-[231px]">Limpiar filtro</Tag>
          </div>
        </header>

        <div className="flex min-h-[1280px]">
          <main className="relative flex-1 overflow-hidden">
            <CityMap />
            <div className="pointer-events-none absolute inset-x-0 top-0">
              <svg className="block h-2 w-full" viewBox="0 0 1412 8" preserveAspectRatio="none" aria-hidden="true">
                <path d={`M0,3${wave(0, 3, 1412, 3, 90, 2)}`} fill="none" stroke="#000" strokeWidth="4" />
              </svg>
            </div>
            <div className="absolute top-8 right-[26px] flex flex-col gap-[22px]">
              <button type="button" aria-label="Filtro">
                <svg className="block size-12" viewBox="0 0 48 48" fill="none" stroke="#000" strokeWidth="5" aria-hidden="true">
                  <path d="M0,11 Q20,10 48,10 M8,24 Q22,23 40,24 M18,38 Q22,35 29,37" />
                </svg>
              </button>
              <button type="button" aria-label="Herramientas">
                <MdBuild className="block size-12" />
              </button>
              <button type="button" aria-label="Pantalla completa">
                <svg className="block size-12" viewBox="0 0 48 48" fill="none" stroke="#000" strokeWidth="5" aria-hidden="true">
                  <path d="M8,19 L7,8 Q12,7 18,8 M30,8 Q36,7 41,8 L40,19 M40,31 L40,42 H30 M18,42 H8 L8,31" />
                </svg>
              </button>
            </div>
          </main>
          <FilterPanel />
        </div>
        <div className="h-[5px]" />
        <SketchFrame w={1954} h={1391} />
        <Callouts />
      </section>

      <section className="relative mt-[103px] min-h-[1282px] w-[541px] px-[31px] pt-[32px]">
        <SketchFrame w={541} h={1282} />
        <h2 className="text-[35px] leading-[48px]">Herramientas</h2>
      </section>
    </div>
  );
}
